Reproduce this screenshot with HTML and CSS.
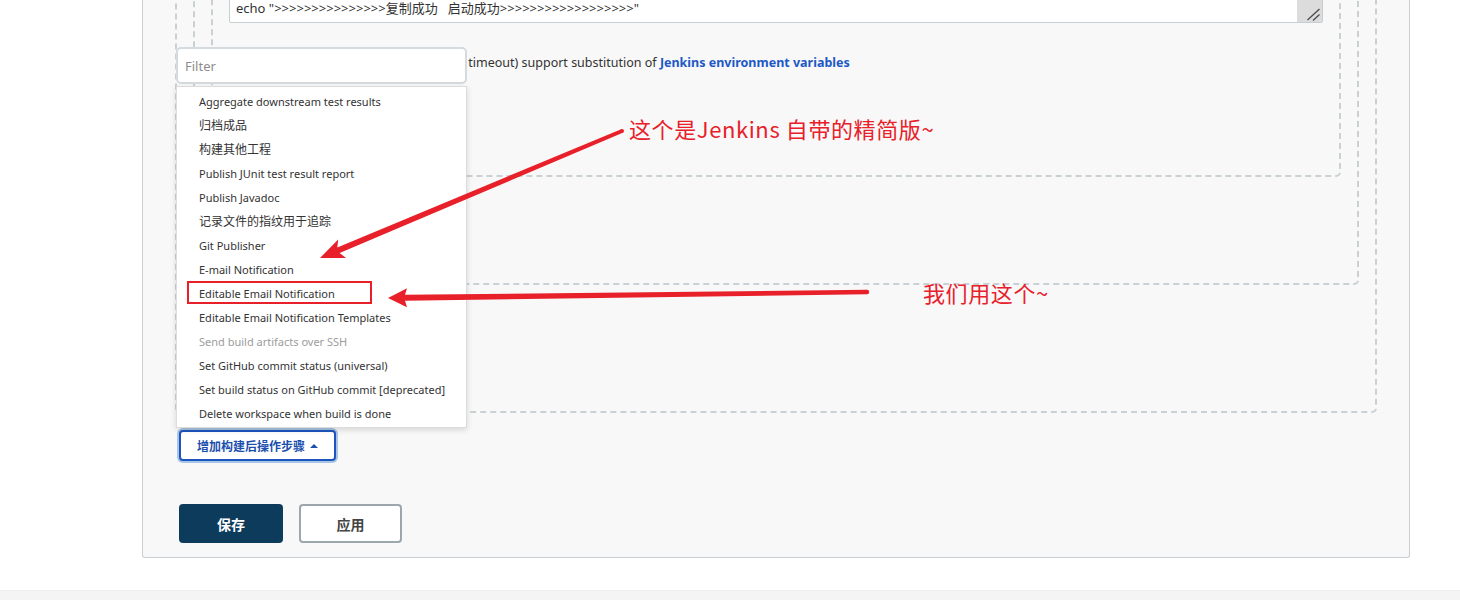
FILE: index.html
```html
<!DOCTYPE html>
<html lang="zh-CN">
<head>
<meta charset="utf-8">
<title>Jenkins post-build</title>
<link rel="stylesheet" href="styles.css">
</head>
<body>
<div class="page">
  <div class="panel">
    <div class="box box-outer">
      <div class="box box-middle">
        <div class="box box-inner">
          <div class="textarea">
            <div class="code">echo "&gt;&gt;&gt;&gt;&gt;&gt;&gt;&gt;&gt;&gt;&gt;&gt;&gt;&gt;&gt;复制成功   启动成功&gt;&gt;&gt;&gt;&gt;&gt;&gt;&gt;&gt;&gt;&gt;&gt;&gt;&gt;&gt;&gt;&gt;&gt;"</div>
            <span class="grip">
              <svg width="25" height="30" viewBox="0 0 25 30"><line x1="10.5" y1="28" x2="22.5" y2="17" stroke="#4a4a4a" stroke-width="1.3"/><line x1="16" y1="28.5" x2="22.5" y2="22.5" stroke="#4a4a4a" stroke-width="1.3"/></svg>
            </span>
          </div>
          <p class="help">All of the transfer fields (except for Exec timeout) support substitution of <a class="link">Jenkins environment variables</a></p>
        </div>
      </div>
    </div>
    <div class="add-step">
      <button class="btn-add">增加构建后操作步骤<span class="caret"></span></button>
    </div>
    <div class="actions">
      <button class="btn btn-save">保存</button>
      <button class="btn btn-apply">应用</button>
    </div>

    <div class="dropdown">
      <input class="filter" type="text" placeholder="Filter">
      <ul class="menu">
        <li>Aggregate downstream test results</li>
        <li class="zh">归档成品</li>
        <li class="zh">构建其他工程</li>
        <li>Publish JUnit test result report</li>
        <li>Publish Javadoc</li>
        <li class="zh">记录文件的指纹用于追踪</li>
        <li>Git Publisher</li>
        <li>E-mail Notification</li>
        <li>Editable Email Notification</li>
        <li>Editable Email Notification Templates</li>
        <li class="disabled">Send build artifacts over SSH</li>
        <li>Set GitHub commit status (universal)</li>
        <li>Set build status on GitHub commit [deprecated]</li>
        <li>Delete workspace when build is done</li>
      </ul>
    </div>
  </div>
  <div class="footer"></div>

  <svg class="annotations" width="1460" height="600" viewBox="0 0 1460 600">
    <rect x="188" y="282" width="183" height="21" fill="none" stroke="#e8202a" stroke-width="2"/>
    <polygon fill="#e8202a" points="320,258 346,257.9 339.6,253 622.8,132.8 621.2,129.2 337.3,247.5 338.2,239.5"/>
    <circle cx="622" cy="131" r="2" fill="#e8202a"/>
    <polygon fill="#e8202a" points="388,298 407,307.3 405,300.8 867,294.2 867,289.8 405,294.8 407,288.3"/>
    <circle cx="867" cy="292" r="2.2" fill="#e8202a"/>
  </svg>
  <div class="note note-1">这个是Jenkins 自带的精简版~</div>
  <div class="note note-2">我们用这个~</div>
</div>
</body>
</html>
```
FILE: styles.css
```css
* { box-sizing: border-box; }
html, body { margin: 0; padding: 0; background: #fff; }
body {
  font-family: "Noto Sans", "Noto Sans CJK SC", sans-serif;
  color: #333;
  width: 1460px;
  height: 600px;
  overflow: hidden;
}
.page { position: relative; width: 1460px; height: 600px; }

.panel {
  position: relative;
  margin-left: 142px;
  width: 1268px;
  height: 558px;
  background: #f8f8f8;
  border: 1px solid #c6ced2;
  border-top: none;
  border-radius: 0 0 3px 3px;
  overflow: hidden;
}

.box {
  border: 2px dashed #cad1d5;
  border-radius: 5px;
  padding: 16px 16px 0;
}
.box-outer { margin: -100px 32px 0; padding-bottom: 126px; }
.box-middle { padding-bottom: 106px; }
.box-inner { padding-bottom: 102px; }

.textarea {
  position: relative;
  height: 69px;
  background: #fff;
  border: 1px solid #c6ced2;
  border-radius: 0 0 2px 2px;
  display: flex;
  align-items: flex-end;
  padding: 0 0 5px 6px;
}
.code {
  font-size: 13px;
  line-height: 18px;
  color: #333;
  white-space: pre;
}
.grip {
  position: absolute;
  right: 0;
  bottom: 0;
  width: 25px;
  height: 30px;
  background: #dcdcdc;
  display: block;
}
.grip svg { display: block; }

.help {
  margin: 30px 0 0;
  padding-left: 4px;
  font-size: 12.5px;
  line-height: 20px;
  color: #333;
  white-space: nowrap;
}
.link { color: #1d58c6; font-weight: 700; }

.add-step { margin: 17px 0 0 36px; }
.btn-add {
  display: flex;
  align-items: center;
  width: 157px;
  height: 31px;
  padding: 0 0 0 16px;
  background: #fff;
  border: 2px solid #1d55c0;
  border-radius: 4px;
  box-shadow: 0 0 0 2px #a8c5e4;
  font: 700 12px "Noto Sans", "Noto Sans CJK SC", sans-serif;
  color: #1b4fae;
}
.caret {
  width: 0;
  height: 0;
  margin-left: 5px;
  border-left: 4px solid transparent;
  border-right: 4px solid transparent;
  border-bottom: 4px solid #1b4fae;
}

.actions {
  display: flex;
  gap: 16px;
  margin: 43px 0 0 36px;
}
.btn {
  height: 39px;
  border-radius: 4px;
  font: 700 14px "Noto Sans", "Noto Sans CJK SC", sans-serif;
}
.btn-save {
  width: 104px;
  background: #0c3b5c;
  border: none;
  color: #fff;
}
.btn-apply {
  width: 103px;
  background: #fff;
  border: 2px solid #9ca6ad;
  color: #444;
}

.dropdown {
  position: absolute;
  left: 33px;
  top: 47px;
  width: 291px;
}
.filter {
  display: block;
  width: 291px;
  height: 37px;
  border: 2px solid #d4dadd;
  border-radius: 5px;
  background: #fff;
  padding: 0 0 0 7px;
  font: 13px "Noto Sans", "Noto Sans CJK SC", sans-serif;
  color: #333;
  outline: none;
}
.filter::placeholder { color: #8c8c8c; }
.menu {
  list-style: none;
  margin: 2px 0 0;
  padding: 3px 0 1px;
  height: 342px;
  background: #fff;
  border: 1px solid #dcdcdc;
  box-shadow: 0 2px 6px rgba(0, 0, 0, 0.14);
}
.menu li {
  height: 24px;
  line-height: 24px;
  padding-left: 22px;
  font-size: 11px;
  color: #333;
  white-space: nowrap;
}
.menu li.zh { font-size: 12px; }
.menu li.disabled { color: #9c9c9c; }

.footer {
  margin-top: 32px;
  height: 10px;
  background: #f4f4f4;
  border-top: 1px solid #efefef;
}

.annotations {
  position: absolute;
  left: 0;
  top: 0;
  pointer-events: none;
}
.note {
  position: absolute;
  font-family: "Noto Sans CJK SC", "Noto Sans", sans-serif;
  font-size: 22px;
  line-height: 22px;
  letter-spacing: 0.6px;
  color: #e8202a;
  white-space: nowrap;
}
.note-1 { left: 629px; top: 117px; }
.note-2 { left: 923px; top: 281px; }
```
